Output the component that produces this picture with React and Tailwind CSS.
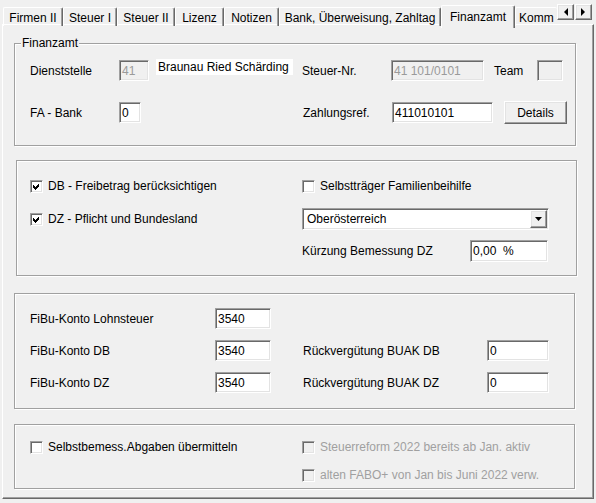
import React from "react";

// Win32-style bevels
const sunken =
  "border border-t-[#a0a0a0] border-l-[#a0a0a0] border-r-white border-b-white shadow-[inset_1px_1px_0_#696969,inset_-1px_-1px_0_#e3e3e3]";
const raised =
  "border border-t-white border-l-white border-r-[#696969] border-b-[#696969] shadow-[inset_-1px_-1px_0_#a0a0a0,inset_1px_1px_0_#e3e3e3]";

const TABS = [
  { label: "Firmen II", w: "w-[60px]" },
  { label: "Steuer I", w: "w-[54px]" },
  { label: "Steuer II", w: "w-[58px]" },
  { label: "Lizenz", w: "w-[49px]" },
  { label: "Notizen", w: "w-[55px]" },
  { label: "Bank, Überweisung, Zahltag", w: "w-[162px]" },
  { label: "Finanzamt", w: "w-[74px]", active: true },
  { label: "Komm", w: "w-[42px]", clipped: true },
];

function Tab({ label, w, active, clipped }) {
  if (active) {
    return (
      <div
        className={`${w} h-[23px] -mb-[2px] relative z-10 shrink-0 bg-[#f0f0f0] flex items-center justify-center border-t border-l border-t-white border-l-white border-r border-r-[#696969] shadow-[inset_-1px_0_0_#a0a0a0] rounded-t-[2px] whitespace-nowrap`}
      >
        {label}
      </div>
    );
  }
  return (
    <div
      className={`${w} h-[19px] shrink-0 flex items-center pt-[2px] border-t border-l border-t-white border-l-white ${
        clipped ? "justify-start pl-[3px]" : "justify-center border-r border-r-[#696969] shadow-[inset_-1px_0_0_#a0a0a0]"
      } rounded-t-[2px] whitespace-nowrap`}
    >
      {label}
    </div>
  );
}

function Arrow({ dir }) {
  return (
    <div className={`w-[17px] h-[16px] ${raised} bg-[#f0f0f0] flex items-center justify-center`}>
      <svg width="5" height="8" viewBox="0 0 5 8">
        {dir === "left" ? (
          <polygon points="5,0 5,8 1,4" fill="#000" />
        ) : (
          <polygon points="0,0 0,8 4,4" fill="#000" />
        )}
      </svg>
    </div>
  );
}

function Field({ value, w, h = "h-[21px]", disabled }) {
  return (
    <div
      className={`${w} ${h} ${sunken} shrink-0 flex items-center pl-[2px] whitespace-pre ${
        disabled ? "bg-[#f0f0f0] text-[#9a9a9a]" : "bg-white text-black"
      }`}
    >
      {value}
    </div>
  );
}

function Check({ checked, disabled }) {
  return (
    <span
      className={`w-[13px] h-[13px] shrink-0 ${sunken} flex items-center justify-center ${
        disabled ? "bg-[#f0f0f0]" : "bg-white"
      }`}
    >
      {checked && (
        <svg width="7" height="7" viewBox="0 0 7 7" shapeRendering="crispEdges">
          <polygon points="0,2 2,4 6,0 6,3 2,7 0,5" fill="#000" />
        </svg>
      )}
    </span>
  );
}

function CheckLabel({ label, checked, disabled }) {
  return (
    <label className={`flex items-center gap-[5px] whitespace-nowrap ${disabled ? "text-[#a0a0a0]" : "text-black"}`}>
      <Check checked={checked} disabled={disabled} />
      <span>{label}</span>
    </label>
  );
}

function Group({ className, caption, children }) {
  return (
    <div
      className={`relative border border-[#a0a0a0] shadow-[1px_1px_0_#fff,inset_1px_1px_0_#fff] ${className}`}
    >
      {caption && (
        <span className="absolute -top-[8px] left-[6px] bg-[#f0f0f0] px-[1px] leading-[14px]">
          {caption}
        </span>
      )}
      {children}
    </div>
  );
}

export default function App() {
  return (
    <div className="w-[596px] h-[503px] bg-[#f0f0f0] font-['Liberation_Sans',Arial,sans-serif] text-[12px] text-black overflow-hidden">
      {/* tab strip */}
      <div className="flex items-end h-[24px] pl-[3px]">
        <div className="flex items-end w-[554px] h-[26px] -mb-[2px]">
          {TABS.map((t) => (
            <Tab key={t.label} {...t} />
          ))}
        </div>
        <div className="flex self-start mt-[4px] gap-[1px]">
          <Arrow dir="left" />
          <Arrow dir="right" />
        </div>
      </div>

      {/* tab page */}
      <div className="mx-[2px] h-[475px] border-t border-l border-t-white border-l-white border-r border-b border-r-[#696969] border-b-[#696969] shadow-[inset_-1px_-1px_0_#a0a0a0]">
        <Group caption="Finanzamt" className="ml-[11px] mt-[18px] w-[562px] h-[103px] pl-[15px] pt-[16px]">
          <div className="flex items-center">
            <span className="w-[89px] shrink-0">Dienststelle</span>
            <Field value="41" w="w-[30px]" disabled />
            <span className="ml-[7px] w-[137px] h-[16px] self-start -mt-[1px] bg-white pl-[2px] leading-[16px] shrink-0">
              Braunau Ried Schärding
            </span>
            <span className="ml-[9px] w-[89px] shrink-0">Steuer-Nr.</span>
            <Field value="41 101/0101" w="w-[93px]" disabled />
            <span className="ml-[10px] w-[43px] shrink-0">Team</span>
            <Field value="" w="w-[26px]" disabled />
          </div>
          <div className="flex items-center mt-[20px]">
            <span className="w-[89px] shrink-0">FA - Bank</span>
            <Field value="0" w="w-[22px]" />
            <span className="w-[162px] shrink-0" />
            <span className="w-[89px] shrink-0">Zahlungsref.</span>
            <Field value="411010101" w="w-[101px]" />
            <button className={`ml-[11px] w-[63px] h-[23px] ${raised} bg-[#f0f0f0] flex items-center justify-center`}>
              Details
            </button>
          </div>
        </Group>

        <Group className="ml-[13px] mt-[14px] w-[561px] h-[116px] pl-[13px] pt-[15px]">
          <div className="flex items-center h-[20px]">
            <div className="w-[272px] shrink-0">
              <CheckLabel label="DB - Freibetrag berücksichtigen" checked />
            </div>
            <CheckLabel label="Selbstträger Familienbeihilfe" />
          </div>
          <div className="flex items-center h-[22px] mt-[12px]">
            <div className="w-[272px] shrink-0">
              <CheckLabel label="DZ - Pflicht und Bundesland" checked />
            </div>
            <div className={`w-[247px] h-[22px] ${sunken} bg-white flex items-center p-[1px]`}>
              <span className="flex-1 pl-[3px]">Oberösterreich</span>
              <div className={`w-[17px] h-[18px] ${raised} bg-[#f0f0f0] flex items-center justify-center`}>
                <svg width="7" height="4" viewBox="0 0 7 4">
                  <polygon points="0,0 7,0 3.5,4" fill="#000" />
                </svg>
              </div>
            </div>
          </div>
          <div className="flex items-center h-[22px] mt-[10px]">
            <div className="w-[272px] shrink-0" />
            <span className="w-[168px] shrink-0">Kürzung Bemessung DZ</span>
            <Field value="0,00  %" w="w-[78px]" h="h-[22px]" />
          </div>
        </Group>

        <Group className="ml-[11px] mt-[17px] w-[561px] h-[116px] pl-[15px] pt-[14px]">
          <div className="flex items-center">
            <span className="w-[185px] shrink-0">FiBu-Konto Lohnsteuer</span>
            <Field value="3540" w="w-[56px]" />
          </div>
          <div className="flex items-center mt-[11px]">
            <span className="w-[185px] shrink-0">FiBu-Konto DB</span>
            <Field value="3540" w="w-[56px]" />
            <span className="ml-[32px] w-[184px] shrink-0">Rückvergütung BUAK DB</span>
            <Field value="0" w="w-[62px]" />
          </div>
          <div className="flex items-center mt-[11px]">
            <span className="w-[185px] shrink-0">FiBu-Konto DZ</span>
            <Field value="3540" w="w-[56px]" />
            <span className="ml-[32px] w-[184px] shrink-0">Rückvergütung BUAK DZ</span>
            <Field value="0" w="w-[62px]" />
          </div>
        </Group>

        <Group className="ml-[11px] mt-[15px] w-[561px] h-[65px] pl-[15px] pt-[12px]">
          <div className="flex items-center h-[20px]">
            <div className="w-[272px] shrink-0">
              <CheckLabel label="Selbstbemess.Abgaben übermitteln" />
            </div>
            <CheckLabel label="Steuerreform 2022 bereits ab Jan. aktiv" disabled />
          </div>
          <div className="flex items-center h-[20px] mt-[8px]">
            <div className="w-[272px] shrink-0" />
            <CheckLabel label="alten FABO+ von Jan bis Juni 2022 verw." disabled />
          </div>
        </Group>
      </div>
    </div>
  );
}
